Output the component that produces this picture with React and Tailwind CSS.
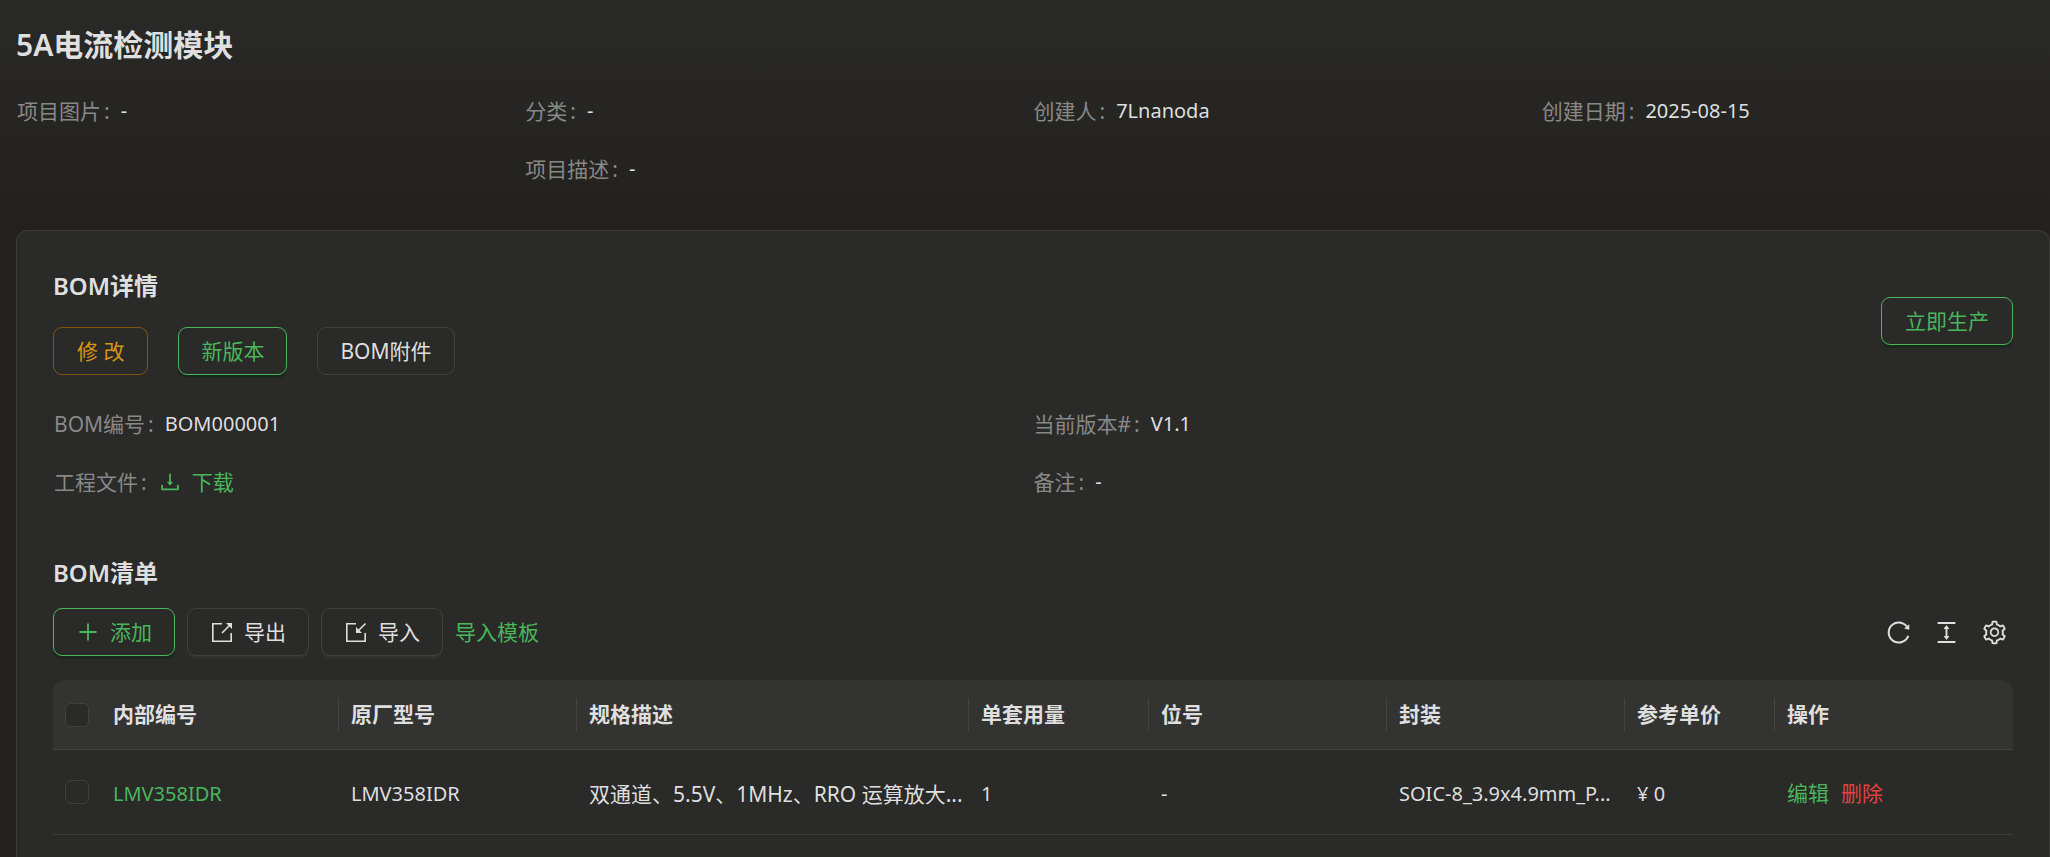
import React from 'react';
import {
  AiOutlineColumnHeight,
  AiOutlineDownload,
  AiOutlinePlus,
  AiOutlineReload,
  AiOutlineSetting
} from 'react-icons/ai';

// ============================================
// DATA
// ============================================

const columns = [
  { key: 'code', title: '内部编号', width: 'w-[238px]' },
  { key: 'mpn', title: '原厂型号', width: 'w-[238px]' },
  { key: 'spec', title: '规格描述', width: 'w-[392px]' },
  { key: 'qty', title: '单套用量', width: 'w-[180px]' },
  { key: 'designator', title: '位号', width: 'w-[238px]' },
  { key: 'footprint', title: '封装', width: 'w-[238px]' },
  { key: 'price', title: '参考单价', width: 'w-[150px]' },
  { key: 'action', title: '操作', width: 'w-[238px]' }
];

const rows = [
  {
    code: 'LMV358IDR',
    mpn: 'LMV358IDR',
    spec: '双通道、5.5V、1MHz、RRO 运算放大...',
    qty: '1',
    designator: '-',
    footprint: 'SOIC-8_3.9x4.9mm_P...',
    price: '¥ 0'
  }
];

// ============================================
// ICONS
// ============================================

const ExportIcon = ({ size }) => (
  <svg width={size} height={size} viewBox="0 0 24 24" fill="none" stroke="currentColor" strokeWidth="1.6">
    <path d="M12 3.8H2.8V21.2H21.2V13M12 13L20 5" />
    <path d="M16 3H22V9Z" fill="currentColor" stroke="none" />
  </svg>
);

const ImportIcon = ({ size }) => (
  <svg width={size} height={size} viewBox="0 0 24 24" fill="none" stroke="currentColor" strokeWidth="1.6">
    <path d="M12 3.8H2.8V21.2H21.2V13M21.5 3.5L13.5 11.5" />
    <path d="M12 13V7L18 13Z" fill="currentColor" stroke="none" />
  </svg>
);

// ============================================
// SHARED PARTS
// ============================================

const buttonTones = {
  primary: 'border-[#49b65b] text-[#49b65b] shadow-[0_3px_0_#1a271d]',
  warning: 'border-[#80560f] text-[#d89614]',
  plain: 'border-[#40403f] text-[#dfdfdf]',
  raised: 'border-[#40403f] text-[#dfdfdf] shadow-[0_3px_0_#313130]'
};

const Button = ({ tone = 'plain', className = 'px-[22px]', icon: Icon, children }) => (
  <button
    type="button"
    className={`flex h-12 items-center justify-center gap-2.5 rounded-[9px] border whitespace-nowrap ${buttonTones[tone]} ${className}`}
  >
    {Icon && <Icon size={24} />}
    {children}
  </button>
);

const Field = ({ label, className = '', children }) => (
  <div className={`flex leading-[34px] ${className}`}>
    <dt className="mr-[11px] text-[#888887]">
      {label}
      <span className="ml-[3px]">:</span>
    </dt>
    <dd className="flex text-xl leading-[34px]">{children}</dd>
  </div>
);

const Checkbox = ({ label }) => (
  <input
    type="checkbox"
    aria-label={label}
    className="block h-6 w-6 appearance-none rounded-md border border-[#40403f] bg-[#2a2a29]"
  />
);

// ============================================
// SECTIONS
// ============================================

const ProjectHeader = () => (
  <header className="pt-5 pl-4">
    <h1 className="text-[30px] leading-[50px] font-semibold">5A电流检测模块</h1>
    <dl className="mt-6 grid grid-cols-4 gap-y-6 pl-px">
      <Field label="项目图片" className="row-span-2">-</Field>
      <Field label="分类">-</Field>
      <Field label="创建人">7Lnanoda</Field>
      <Field label="创建日期">2025-08-15</Field>
      <Field label="项目描述" className="col-span-3">-</Field>
    </dl>
  </header>
);

const BomDetail = () => (
  <section>
    <div className="flex items-center justify-between">
      <div>
        <h2 className="mb-[22px] text-2xl leading-[38px] font-semibold">BOM详情</h2>
        <div className="flex gap-[30px]">
          <Button tone="warning" className="px-[23px]">修 改</Button>
          <Button tone="primary">新版本</Button>
          <Button>BOM附件</Button>
        </div>
      </div>
      <Button tone="primary" className="px-[23px]">立即生产</Button>
    </div>
    <dl className="mt-8 grid grid-cols-2 gap-y-6 pl-px">
      <Field label="BOM编号">BOM000001</Field>
      <Field label="当前版本#">V1.1</Field>
      <Field label="工程文件">
        <a href="#download" className="flex items-center gap-2.5 text-[21px] text-[#49b65b]">
          <AiOutlineDownload size={24} />
          下载
        </a>
      </Field>
      <Field label="备注">-</Field>
    </dl>
  </section>
);

const Toolbar = () => (
  <div className="mt-4 flex items-center justify-between">
    <div className="flex items-center gap-3">
      <Button tone="primary" icon={AiOutlinePlus}>添加</Button>
      <Button tone="raised" icon={ExportIcon}>导出</Button>
      <Button tone="raised" icon={ImportIcon}>导入</Button>
      <a href="#template" className="text-[#49b65b]">导入模板</a>
    </div>
    <div className="mr-[5px] flex gap-[21px]">
      <button type="button" aria-label="刷新"><AiOutlineReload size={27} /></button>
      <button type="button" aria-label="密度"><AiOutlineColumnHeight size={27} /></button>
      <button type="button" aria-label="列设置"><AiOutlineSetting size={27} /></button>
    </div>
  </div>
);

const BomTable = () => (
  <table className="mt-6 w-full table-fixed border-separate border-spacing-0 text-left">
    <thead>
      <tr className="h-[70px]">
        <th className="w-12 rounded-tl-xl border-b border-[#434342] bg-[#333332] pl-3">
          <Checkbox label="全选" />
        </th>
        {columns.map((col, i) => (
          <th
            key={col.key}
            className={`${col.width} border-b border-[#434342] bg-[#333332] font-semibold last:rounded-tr-xl`}
          >
            <div
              className={`pl-3 leading-[33px] ${i < columns.length - 1 ? 'border-r border-[#434342]' : ''}`}
            >
              {col.title}
            </div>
          </th>
        ))}
      </tr>
    </thead>
    <tbody>
      {rows.map((row) => (
        <tr key={row.code} className="h-[85px]">
          <td className="border-b border-[#3c3c3b] pl-3">
            <Checkbox label={row.code} />
          </td>
          {columns.map((col) => (
            <td
              key={col.key}
              className={`border-b border-[#3c3c3b] px-3 pt-1 whitespace-nowrap ${col.key === 'spec' ? '' : 'text-xl'}`}
            >
              {col.key === 'code' && <a href="#part" className="text-[#49b65b]">{row.code}</a>}
              {col.key === 'action' && (
                <div className="flex gap-3 text-[21px]">
                  <a href="#edit" className="text-[#49b65b]">编辑</a>
                  <a href="#delete" className="text-[#e04243]">删除</a>
                </div>
              )}
              {col.key !== 'code' && row[col.key]}
            </td>
          ))}
        </tr>
      ))}
    </tbody>
  </table>
);

const App = () => (
  <div className="flex min-h-screen flex-col bg-[#22211d] bg-linear-to-b from-[#292928] to-[#22211d] to-[230px] font-['Noto_Sans','Noto_Sans_CJK_SC',sans-serif] text-[21px] leading-[33px] text-[#dfdfdf]">
    <ProjectHeader />
    <main className="mt-11 ml-4 flex-1 rounded-t-xl border border-b-0 border-[#3c3c3b] bg-[#2a2a29] px-9 pt-9">
      <BomDetail />
      <section className="mt-[55px]">
        <h2 className="text-2xl leading-[38px] font-semibold">BOM清单</h2>
        <Toolbar />
        <BomTable />
      </section>
    </main>
  </div>
);

export default App;
